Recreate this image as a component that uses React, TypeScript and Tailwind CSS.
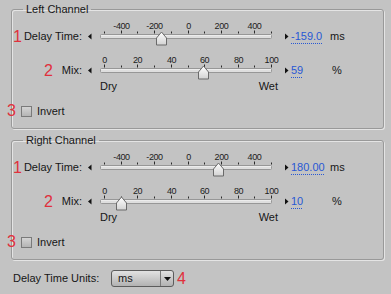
import React from 'react';

type Scale = { min: number; max: number; step: number; labelEvery: number };

const DELAY: Scale = { min: -500, max: 500, step: 100, labelEvery: 200 };
const MIX: Scale = { min: 0, max: 100, step: 10, labelEvery: 20 };

// scale ends inside the svg
const X0 = 8;
const X1 = 175;

function Slider({ scale, value }: { scale: Scale; value: number }) {
  const pos = (v: number) => X0 + ((v - scale.min) / (scale.max - scale.min)) * (X1 - X0);
  const ticks: number[] = [];
  for (let v = scale.min; v <= scale.max; v += scale.step) ticks.push(v);
  const tx = Math.round(pos(value)) + 0.5;

  return (
    <svg width="184" height="26" viewBox="0 0 184 26" className="block shrink-0">
      <defs>
        <linearGradient id="thumbFill" x1="0" y1="0" x2="0" y2="1">
          <stop offset="0" stopColor="#ffffff" />
          <stop offset="1" stopColor="#d2d2d2" />
        </linearGradient>
      </defs>
      {ticks.map((v) => {
        const x = Math.round(pos(v)) + 0.5;
        const major = v % scale.labelEvery === 0;
        return (
          <g key={v}>
            <line x1={x} x2={x} y1={major ? 10.5 : 11.5} y2={13.5} stroke="#2a2a2a" strokeWidth="1" />
            {major && (
              <text
                x={x}
                y={9}
                textAnchor="middle"
                fontSize="9"
                letterSpacing="-0.4"
                fontFamily="Liberation Sans, Arial, sans-serif"
                fill="#1c1c1c"
              >
                {v}
              </text>
            )}
          </g>
        );
      })}
      <rect x="4.5" y="14.5" width="171" height="4" rx="1" fill="#dedede" stroke="#979797" />
      <line x1="5" x2="175" y1="15.5" y2="15.5" stroke="#ececec" />
      <polygon
        points={`${tx - 5},25 ${tx - 5},18 ${tx},12 ${tx + 5},18 ${tx + 5},25`}
        fill="url(#thumbFill)"
        stroke="#6a6a6a"
        strokeWidth="1"
      />
    </svg>
  );
}

function ArrowLeft() {
  return (
    <svg width="12" height="26" className="block shrink-0">
      <polygon points="4,16.5 7.5,13.5 7.5,19.5" fill="#111" />
    </svg>
  );
}

function ArrowRight() {
  return (
    <svg width="9" height="26" className="block shrink-0">
      <polygon points="5,13.5 8.5,16.5 5,19.5" fill="#111" />
    </svg>
  );
}

interface SliderRowProps {
  num: string;
  numGap: string;
  label: string;
  scale: Scale;
  value: number;
  text: string;
  unit: string;
  unitPad?: string;
  className?: string;
}

function SliderRow({ num, numGap, label, scale, value, text, unit, unitPad = '', className = '' }: SliderRowProps) {
  return (
    <div className={`flex items-start h-[26px] ${className}`}>
      <div className="w-[72px] flex justify-end pt-[10px] leading-[13px] pr-[2px]">
        <span className={`text-[16px] leading-[13px] text-[#e0303c] ${numGap}`}>{num}</span>
        <span>{label}</span>
      </div>
      <ArrowLeft />
      <Slider scale={scale} value={value} />
      <ArrowRight />
      <div className="w-[41px] pt-[10px] leading-[13px] pl-[2px]">
        <span className="text-[#2858d4] underline decoration-dotted decoration-[#2858d4] underline-offset-[3px]">
          {text}
        </span>
      </div>
      <div className={`pt-[10px] leading-[13px] ${unitPad}`}>{unit}</div>
    </div>
  );
}

interface ChannelProps {
  title: string;
  delay: number;
  delayText: string;
  mix: number;
  className?: string;
}

function Channel({ title, delay, delayText, mix, className = '' }: ChannelProps) {
  return (
    <fieldset
      className={`w-[373px] h-[127px] rounded-[3px] border border-[#999999] shadow-[inset_1px_1px_0_#e4e4e4,1px_1px_0_#e4e4e4] ${className}`}
    >
      <legend className="ml-[11px] px-[3px] leading-[14px]">{title}</legend>
      <SliderRow
        className="mt-[4px]"
        num="1"
        numGap="mr-[2px]"
        label="Delay Time:"
        scale={DELAY}
        value={delay}
        text={delayText}
        unit="ms"
      />
      <SliderRow
        className="mt-[8px]"
        num="2"
        numGap="mr-[9px]"
        label="Mix:"
        scale={MIX}
        value={mix}
        text={String(mix)}
        unit="%"
        unitPad="pl-[2px]"
      />
      <div className="ml-[88px] w-[178px] flex justify-between leading-[12px]">
        <span>Dry</span>
        <span>Wet</span>
      </div>
      <div className="mt-[12px] h-[14px] flex items-center ml-[-5px]">
        <span className="w-[14px] text-[16px] leading-[14px] text-[#e0303c]">3</span>
        <span className="w-[11px] h-[11px] border border-[#7a7a7a] bg-linear-to-b from-[#d4d4d4] to-[#b4b4b4]" />
        <span className="ml-[5px] leading-[14px]">Invert</span>
      </div>
    </fieldset>
  );
}

export default function App() {
  return (
    <div className="w-[391px] h-[294px] overflow-hidden bg-[#c3c3c3] pl-[11px] pt-[2px] font-['Liberation_Sans',Arial,sans-serif] text-[11px] text-[#161616]">
      <Channel title="Left Channel" delay={-159} delayText="-159.0" mix={59} />
      <Channel title="Right Channel" delay={180} delayText="180.00" mix={10} className="mt-[4px]" />
      <div className="mt-[10px] flex items-center h-[17px]">
        <span className="ml-[2px] w-[98px]">Delay Time Units:</span>
        <div className="w-[63px] h-[17px] flex rounded-[3px] border border-[#5c5c5c] bg-linear-to-b from-[#e2e2e2] to-[#b2b2b2]">
          <span className="flex-1 pl-[6px] leading-[15px]">ms</span>
          <span className="w-[13px] border-l border-[#7a7a7a] flex items-center justify-center">
            <svg width="7" height="4" className="block">
              <polygon points="0,0 7,0 3.5,4" fill="#111" />
            </svg>
          </span>
        </div>
        <span className="ml-[3px] text-[16px] leading-[17px] text-[#e0303c]">4</span>
      </div>
    </div>
  );
}
